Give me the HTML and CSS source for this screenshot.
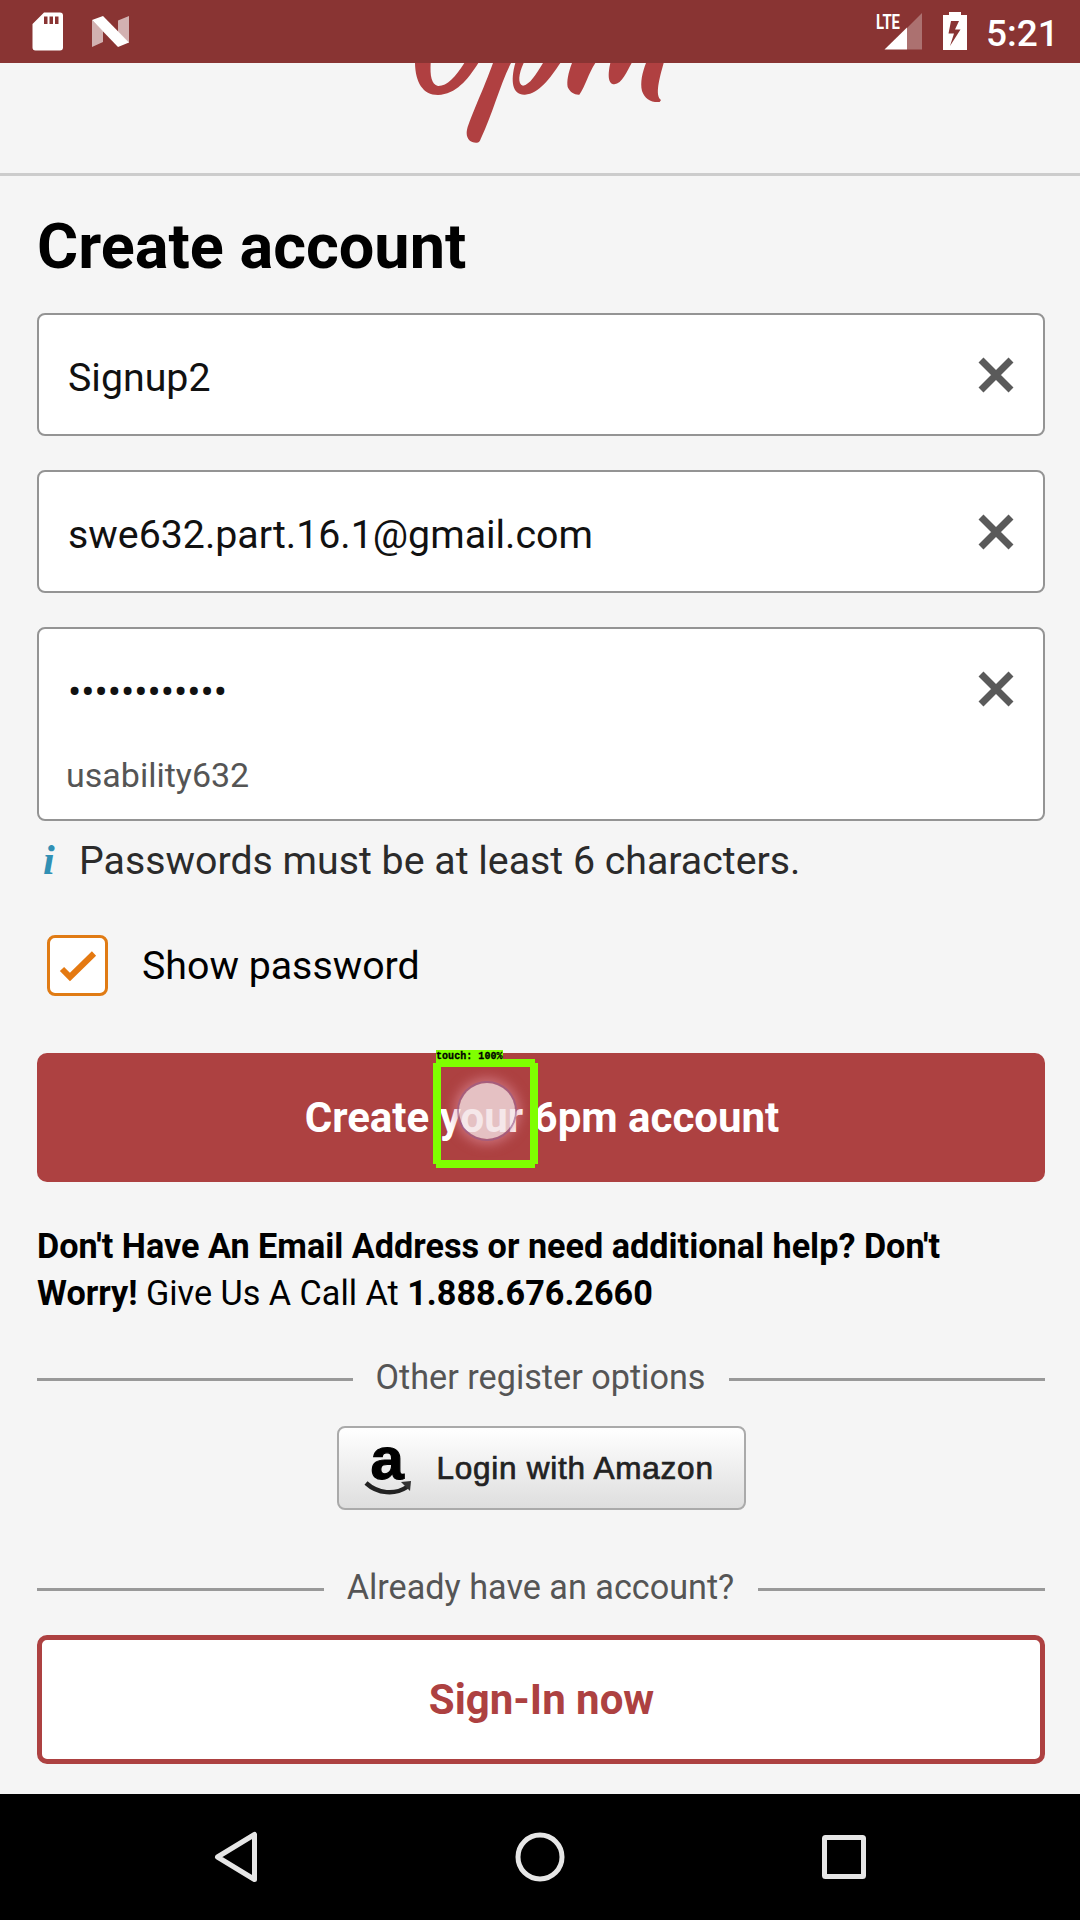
FILE: index.html
```html
<!DOCTYPE html>
<html lang="en">
<head>
<meta charset="utf-8">
<title>Create account</title>
<link rel="stylesheet" href="styles.css">
</head>
<body>
<div class="screen">
  <header class="status">
    <svg class="status-left" width="140" height="63" viewBox="0 0 140 63">
      <path fill="#fff" fill-rule="evenodd" d="M44 12.5H60a3 3 0 0 1 3 3V47.500a3 3 0 0 1-3 3H35.500a3 3 0 0 1-3-3V24zM44 16.500v7.500h3.500v-7.500zM49.500 16.500v7.500h3.500v-7.500zM55 16.500v7.500h3.500v-7.500z"/>
      <path fill="#fff" opacity=".62" d="M92 20V47l11-5V31zM118 20.500 129 16V43L118 32z"/>
      <path fill="#fff" d="M92 20l11-4 26 26.500L118 47z"/>
    </svg>
    <div class="status-right">
      <svg width="110" height="63" viewBox="866 0 110 63">
        <path fill="#fff" opacity=".3" d="M907 28L922 13V49.500H907z"/>
        <path fill="#fff" d="M884.500 49.500L907 27.500V49.500z"/>
        <text class="lte" x="876" y="29" textLength="24" lengthAdjust="spacingAndGlyphs">LTE</text>
        <path fill="#fff" fill-rule="evenodd" d="M949 12h12v3h6V50H943V15h6zM951 21 948.500 33.500H954L950 46 960.500 29.500H955L959 21z"/>
      </svg>
      <span class="clock">5:21</span>
    </div>
  </header>

  <div class="brand">
    <svg width="260" height="110" viewBox="105 188 780 330" fill="#b04041">
      <path d="M105 188C106 245 128 284 174 284C228 281 262 240 295 188H253C226 231 200 258 174 257C154 252 150 226 152 188z"/>
      <path d="M339 188C312 264 271 350 261 388C256 413 270 428 290 427Q299 427 302 416C339 338 360 253 393 188z"/>
      <path d="M406 188C390 244 398 285 435 283C477 280 510 234 541 188H489C468 223 449 253 429 256C412 251 416 220 431 188z"/>
      <path d="M576 188C564 220 560 244 563 260C570 276 584 284 598 283C617 256 625 220 646 188zM691 188C684 219 682 251 703 252C726 250 741 213 755 188zM798 188C787 217 780 246 786 272C794 296 813 307 839 305L843 299C824 286 838 235 851 188z"/>
    </svg>
  </div>

  <main class="content">
    <h1 class="title">Create account</h1>
    <form class="form">
      <div class="field">
        <span class="value name">Signup2</span>
        <svg class="clear" width="36" height="36" viewBox="0 0 36 36"><path d="M3 3L33 33M33 3L3 33"/></svg>
      </div>
      <div class="field">
        <span class="value email">swe632.part.16.1@gmail.com</span>
        <svg class="clear" width="36" height="36" viewBox="0 0 36 36"><path d="M3 3L33 33M33 3L3 33"/></svg>
      </div>
      <div class="field password">
        <div class="field-row">
          <span class="value">••••••••••••</span>
          <svg class="clear" width="36" height="36" viewBox="0 0 36 36"><path d="M3 3L33 33M33 3L3 33"/></svg>
        </div>
        <div class="revealed">usability632</div>
      </div>
    </form>
    <p class="hint"><span class="info">i</span><span class="hint-text">Passwords must be at least 6 characters.</span></p>
    <div class="show">
      <span class="checkbox"><svg width="56" height="56" viewBox="0 0 56 56"><path d="M12 31L20 39L44 15.500"/></svg></span>
      <span class="show-text">Show password</span>
    </div>
    <div class="primary"><span class="primary-text">Create your 6pm account</span>
      <div class="touch">
        <span class="touch-label">touch: 100%</span>
        <svg width="105" height="109" viewBox="0 0 105 109"><path fill="#7fff00" fill-rule="evenodd" d="M3 0H102V4H105V105H102V109H3V105H0V4H3zM8 8V101H97V8z"/></svg>
        <span class="dot"></span>
      </div>
    </div>
    <p class="help"><b>Don't Have An Email Address or need additional help? Don't<br>Worry!</b> Give Us A Call At <b>1.888.676.2660</b></p>
    <div class="divider register"><span>Other register options</span></div>
    <div class="amazon">
      <div class="amazon-mark">a<svg width="50" height="18" viewBox="0 0 50 18"><path d="M2 3C14 14 31 15 43 7" fill="none" stroke="#222" stroke-width="4.500"/><path d="M37 2L47 1L46 11z" fill="#333"/></svg></div>
      <span class="amazon-text">Login with Amazon</span>
    </div>
    <div class="divider existing"><span>Already have an account?</span></div>
    <div class="secondary"><span>Sign-In now</span></div>
  </main>

  <nav class="nav">
    <svg width="1080" height="126" viewBox="0 1794 1080 126" fill="none" stroke="#e6e6e6" stroke-width="5" stroke-linejoin="round">
      <path d="M217.500 1857L254.500 1834.500V1879.500z"/>
      <circle cx="540" cy="1857" r="22"/>
      <rect x="824.500" y="1837.500" width="39" height="39" rx="1"/>
    </svg>
  </nav>
</div>
</body>
</html>
```
FILE: styles.css
```css
* { box-sizing: border-box; }
body { margin: 0; background: #f5f5f5; font-family: Roboto, sans-serif; color: #111; }
h1, p { margin: 0; }
svg { display: block; flex: none; }
.screen { width: 1080px; height: 1920px; display: flex; flex-direction: column; overflow: hidden; }

.status { height: 63px; flex: none; display: flex; justify-content: space-between; background: #893433; }
.status-right { display: flex; width: 214px; }
.lte { font: 700 20px Roboto, sans-serif; fill: #fff; }
.clock { margin-left: 10px; font-size: 37px; font-weight: 500; line-height: 67px; color: #fff; white-space: nowrap; }

.brand { height: 113px; flex: none; padding-left: 415px; border-bottom: 3px solid #ccc; }

.content { flex: 1; padding: 36px 35px 0 37px; }
.title { font-size: 63px; line-height: 70px; color: #000; white-space: nowrap; }
.form { display: flex; flex-direction: column; gap: 34px; margin-top: 31px; }
.field { height: 123px; padding: 0 29px 0 29px; display: flex; align-items: center; justify-content: space-between; background: #fff; border: 2px solid #949494; border-radius: 8px; }
.value { padding-top: 6px; font-size: 39.3px; line-height: 46px; white-space: nowrap; }
.clear { stroke: #5a5a5a; stroke-width: 7; }
.password { height: 194px; flex-direction: column; align-items: stretch; justify-content: flex-start; }
.field-row { height: 120px; display: flex; align-items: center; justify-content: space-between; }
.revealed { margin: 5px 0 0 -2px; font-size: 34px; line-height: 42px; color: #555; }

.hint { display: flex; align-items: center; height: 50px; margin-top: 15px; font-size: 39.3px; color: #2b2b2b; white-space: nowrap; }
.info { width: 42px; padding: 0 0 3px 6px; font: italic 700 42px "Liberation Serif", serif; color: #3190b4; }
.show { display: flex; align-items: center; margin: 49px 0 0 10px; gap: 34px; font-size: 39.3px; color: #000; white-space: nowrap; }
.checkbox { width: 61px; height: 61px; border: 3px solid #e07b14; border-radius: 8px; background: #fff; }
.checkbox path { fill: none; stroke: #e47911; stroke-width: 6; }

.primary { position: relative; height: 129px; margin-top: 57px; padding: 0 0 1px 2px; display: flex; align-items: center; justify-content: center; background: #ad4141; border-radius: 10px; font-size: 42px; font-weight: 700; color: #fff; }
.touch { position: absolute; left: 396px; top: 6px; }
.touch-label { position: absolute; left: 3px; top: -9px; width: 67px; height: 12px; background: #7fff00; color: #000; font: 700 10px/13px "Liberation Mono", monospace; letter-spacing: .05px; -webkit-text-stroke: .3px #000; white-space: nowrap; }
.dot { position: absolute; left: 26px; top: 24px; width: 56px; height: 56px; border-radius: 50%; background: rgba(242, 225, 228, .8); box-shadow: 0 0 0 2px rgba(140, 90, 140, .55), 0 0 12px 5px rgba(225, 145, 160, .6); }

.help { margin-top: 41px; font-size: 34.2px; line-height: 47px; color: #000; white-space: nowrap; }
.divider { display: flex; align-items: center; gap: 24px; font-size: 34.2px; line-height: 40px; color: #555; white-space: nowrap; }
.divider::before, .divider::after { content: ""; flex: 1; height: 3px; margin-top: 4px; background: #999; }
.divider span { margin-left: -1px; }
.register { margin-top: 40px; }
.amazon { width: 409px; height: 84px; margin: 29px auto 0; padding-left: 26px; display: flex; align-items: center; background: linear-gradient(#fff, #dedede); border: 2px solid #aaa; border-radius: 8px; color: #222; }
.amazon-mark { width: 72px; height: 60px; padding-left: 6px; font: 700 60px/42px "Liberation Sans", Arial, sans-serif; color: #000; -webkit-text-stroke: 1.2px #000; }
.amazon-mark svg { margin-left: -7px; }
.amazon-text { font: 31.5px "Liberation Sans", Arial, sans-serif; letter-spacing: .75px; -webkit-text-stroke: .7px #222; white-space: nowrap; }
.existing { margin-top: 57px; }
.secondary { height: 129px; margin-top: 28px; padding: 0 0 1px 1px; display: flex; align-items: center; justify-content: center; background: #fff; border: 5px solid #ad4141; border-radius: 10px; color: #ad4141; font-size: 42px; font-weight: 700; }
.nav { height: 126px; flex: none; background: #000; }
```
